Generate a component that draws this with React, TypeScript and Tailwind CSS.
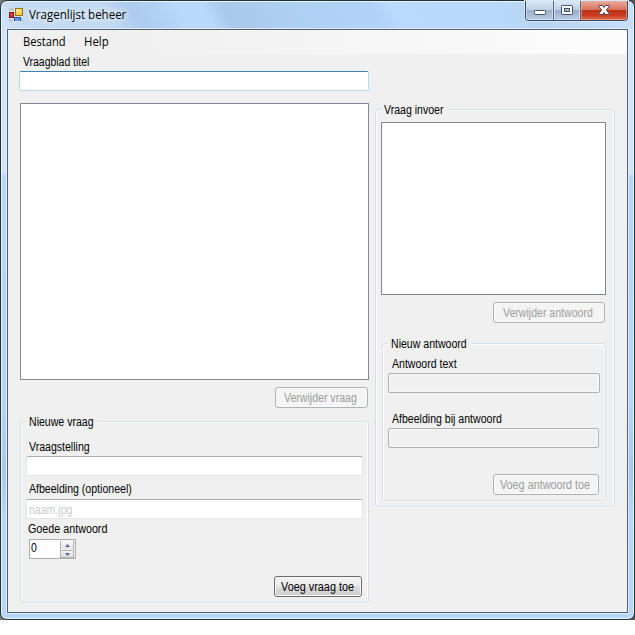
import React from "react";

function Txt({ children, className = "" }: { children: React.ReactNode; className?: string }) {
  return (
    <span
      className={`block w-max origin-left scale-x-[0.88] whitespace-nowrap font-['Liberation_Sans',Arial,sans-serif] text-[12px] leading-[14px] ${className}`}
    >
      {children}
    </span>
  );
}

function Group({
  title,
  legendClass,
  className,
  children,
}: {
  title: string;
  legendClass: string;
  className: string;
  children: React.ReactNode;
}) {
  return (
    <section
      className={`flex flex-col rounded-[3px] border border-[#d5dfe7] shadow-[inset_1px_1px_0_#fdfdfd,inset_-1px_0_0_#fdfdfd,0_1px_0_#fdfdfd] ${className}`}
    >
      <div className={`-mt-[7px] ml-[5px] h-[14px] bg-[#f0f0f0] pl-[3px] ${legendClass}`}>
        <Txt>{title}</Txt>
      </div>
      {children}
    </section>
  );
}

function PushButton({ label, className, disabled = false }: { label: string; className: string; disabled?: boolean }) {
  return (
    <button
      disabled={disabled}
      className={`flex h-[21px] justify-start rounded-[3px] border pt-[3px] ${
        disabled
          ? "border-[#adb2b5] bg-[#f4f4f4] text-[#9c9c9c] shadow-[inset_0_0_0_1px_#fafafa]"
          : "border-[#6c6c6c] bg-[linear-gradient(#f3f3f3,#ebebeb_49%,#dcdcdc_51%,#cecece)] text-black shadow-[inset_0_0_0_1px_#f8f8f8]"
      } ${className}`}
    >
      <Txt>{label}</Txt>
    </button>
  );
}

function TextBox({ className = "", children }: { className?: string; children?: React.ReactNode }) {
  return (
    <div className={`h-[20px] rounded-[2px] border border-[#e2e3ea] border-t-[#abadb3] bg-white pl-[2px] pt-[3px] ${className}`}>
      {children}
    </div>
  );
}

function DisabledBox({ className }: { className: string }) {
  return <div className={`h-[20px] rounded-[2px] border border-[#afb1b3] bg-[#f0f0f0] shadow-[inset_0_0_0_1px_#f7f7f7] ${className}`} />;
}

function AppIcon() {
  return (
    <svg width="14" height="14" viewBox="0 0 14 14" shapeRendering="crispEdges">
      <rect x="0" y="0" width="14" height="14" fill="#dfe4ea" />
      <rect x="0" y="0" width="5" height="3" fill="#c3c9d1" />
      <rect x="0" y="11" width="4" height="3" fill="#c3c9d1" />
      <rect x="12" y="10" width="2" height="4" fill="#c3c9d1" />
      <rect x="6" y="0" width="8" height="8" fill="#9b7313" />
      <rect x="7" y="1" width="6" height="6" fill="#f9cf43" />
      <rect x="7" y="1" width="5" height="3" fill="#fde481" />
      <rect x="0" y="4" width="5" height="6" fill="#841411" />
      <rect x="1" y="5" width="3" height="4" fill="#d9352b" />
      <rect x="2" y="6" width="1" height="1" fill="#f38b7c" />
      <rect x="5" y="9" width="7" height="4" fill="#2454a5" />
      <rect x="6" y="10" width="5" height="3" fill="#5d96ee" />
    </svg>
  );
}

function CaptionButtons() {
  return (
    <div className="flex h-[20px] w-[103px] overflow-hidden rounded-b-[4px] border border-t-0 border-[#3b4c62] shadow-[0_0_0_1px_#d3e7fb]">
      <div className="flex w-[28px] justify-center border-r border-[#52637a] bg-[linear-gradient(#dce8f5,#c1d0e2_45%,#9dafc8_50%,#b8cde6)] shadow-[inset_0_0_0_1px_#dce9f7aa]">
        <svg width="14" height="18" viewBox="0 0 14 18">
          <rect x="1.5" y="9.5" width="11" height="4" rx="0.7" fill="#fff" stroke="#47516a" />
        </svg>
      </div>
      <div className="flex w-[27px] justify-center border-r border-[#52637a] bg-[linear-gradient(#dce8f5,#c1d0e2_45%,#9dafc8_50%,#b8cde6)] shadow-[inset_0_0_0_1px_#dce9f7aa]">
        <svg width="14" height="18" viewBox="0 0 14 18">
          <rect x="1.5" y="4.5" width="11" height="9" rx="0.7" fill="#fff" stroke="#47516a" />
          <rect x="4.5" y="7.5" width="5" height="3" fill="#a5bad3" stroke="#47516a" />
        </svg>
      </div>
      <div className="flex flex-1 justify-center bg-[linear-gradient(#eaaa9d,#d8745f_45%,#bb3115_50%,#c93a1d_75%,#df7453)] shadow-[inset_0_0_0_1px_#f0aa9999]">
        <svg width="14" height="18" viewBox="0 0 14 18">
          <path
            d="M2 4.5h3.6L7 6.5l1.4-2H12v1.2L9.4 9l2.6 3.3v1.2H8.4L7 11.5l-1.4 2H2v-1.2L4.6 9 2 5.7z"
            fill="#fff"
            stroke="#553b50"
            strokeWidth="1"
          />
        </svg>
      </div>
    </div>
  );
}

function Spinner() {
  return (
    <div className="ml-[8px] mt-[3px] flex h-[20px] w-[47px] border border-[#abadb3] bg-white">
      <Txt className="ml-[1px] mt-[1px] w-[28px]!">0</Txt>
      <div className="ml-auto flex w-[15px] flex-col bg-[#f0f0f0] pr-[1px] pt-[1px]">
        <div className="flex h-[8px] items-center justify-center border-x border-[#b2b2b2] border-t-[#e4e4e4] bg-[linear-gradient(#f7f7f7,#e5e5e5)]">
          <svg width="5" height="3" viewBox="0 0 5 3">
            <path d="M0 3 2.5 0 5 3z" fill="#4968a5" />
          </svg>
        </div>
        <div className="mt-[1px] flex h-[8px] items-center justify-center border border-[#b2b2b2] bg-[linear-gradient(#f4f4f4,#dadada)]">
          <svg width="5" height="3" viewBox="0 0 5 3">
            <path d="M0 0h5L2.5 3z" fill="#4968a5" />
          </svg>
        </div>
      </div>
    </div>
  );
}

export default function App() {
  return (
    <div className="h-[635px] w-[635px] overflow-hidden bg-white text-black">
      <div className="h-[620px] w-[635px] bg-[linear-gradient(90deg,#777_50%,#555)]">
        <div className="flex h-[620px] w-[635px] flex-col rounded-[7px] border border-[#25303f] bg-[linear-gradient(#c3dcf800,#e9f1fa00_173px,#b7d6f8_174px,#b5d5f8_400px,#a9c8ec_470px,#b8d8fb_520px,#b5d6f9),linear-gradient(90deg,#cfe1f8,#e7f0fa_3%,#e7f0fa_97%,#cde3fb)] px-[6px] pb-[6px] shadow-[inset_0_0_0_1px_#e9f5ff]">
          {/* Title bar */}
          <header className="-mx-[5px] mt-px flex h-[27px] items-start rounded-t-[5px] bg-[linear-gradient(61deg,#cfe2f7_0%,#c3daf3_5%,#c3daf3_17%,#accbed_22%,#b0d0f3_25%,#b9d9fb_29%,#b9d9fb_33%,#a9c9ec_36%,#aed0f3_48%,#b0d3f7_59%,#b9d9fd_62%,#b9d9fb_78%,#b9d5f2_84%,#c8dff7_100%)]">
            <div className="ml-[7px] mt-[6px]">
              <AppIcon />
            </div>
            <span className="ml-[6px] mt-[5px] block origin-left scale-x-[0.96] whitespace-nowrap font-['Open_Sans','Noto_Sans',sans-serif] text-[12px] leading-[16px] [text-shadow:0_0_8px_#fff,0_0_8px_#e8f3ff]">
              Vragenlijst beheer
            </span>
            <div className="-mt-px ml-auto mr-[5px]">
              <CaptionButtons />
            </div>
          </header>

          {/* Client area */}
          <div className="flex h-[584px] w-[621px] flex-col border border-[#536070] bg-[#f0f0f0] shadow-[0_0_0_1px_#dceeff]">
            <nav className="flex h-[24px] shrink-0 bg-[linear-gradient(90deg,#f0f0f0_20%,#fcfcfc_95%)] pl-[15px] pt-[4px] font-['Open_Sans','Noto_Sans',sans-serif] text-[12px] leading-[16px]">
              <span className="block w-[61px] origin-left scale-x-[0.93]">Bestand</span>
              <span className="block origin-left scale-x-[0.95]">Help</span>
            </nav>

            <main className="flex">
              <div className="ml-[11px] flex w-[350px] flex-col">
                <Txt className="ml-[4px] mt-[1px] scale-x-[0.87]!">Vraagblad titel</Txt>
                <div className="mt-[2px] h-[20px] rounded-[2px] border border-[#b5d9ed] border-t-[#4081ad] bg-white" />
                <div className="ml-[1px] mt-[12px] h-[277px] border border-[#828790] bg-white" />
                <PushButton label="Verwijder vraag" disabled className="ml-[256px] mt-[7px] w-[93px] pl-[8px]" />

                <Group title="Nieuwe vraag" className="ml-[1px] mt-[13px] h-[182px] w-[349px]" legendClass="w-[71px]">
                  <Txt className="ml-[8px] mt-[11px]">Vraagstelling</Txt>
                  <TextBox className="ml-[5px] mt-[2px] w-[337px]" />
                  <Txt className="ml-[8px] mt-[6px]">Afbeelding (optioneel)</Txt>
                  <TextBox className="ml-[5px] mt-[3px] w-[337px]">
                    <Txt className="text-[#cbcbcb]">naam.jpg</Txt>
                  </TextBox>
                  <Txt className="ml-[7px] mt-[3px] scale-x-[0.895]!">Goede antwoord</Txt>
                  <Spinner />
                  <PushButton label="Voeg vraag toe" className="ml-[253px] mt-[17px] w-[88px] pl-[6px] [&>span]:scale-x-[0.905]" />
                </Group>
              </div>

              <Group title="Vraag invoer" className="ml-[6px] mt-[55px] h-[398px] w-[240px]" legendClass="w-[66px] ml-[6px]! pl-[2px]!">
                <div className="ml-[5px] mt-[5px] h-[173px] w-[225px] shrink-0 border border-[#828790] bg-white" />
                <PushButton label="Verwijder antwoord" disabled className="ml-[117px] mt-[7px] w-[112px] shrink-0 pl-[9px]" />
                <Group title="Nieuw antwoord" className="ml-[6px] mt-[20px] h-[158px] w-[224px] shrink-0" legendClass="w-[84px]">
                  <Txt className="ml-[9px] mt-[6px]">Antwoord text</Txt>
                  <DisabledBox className="ml-[5px] mt-[2px] w-[212px]" />
                  <Txt className="ml-[9px] mt-[19px]">Afbeelding bij antwoord</Txt>
                  <DisabledBox className="ml-[5px] mt-[2px] w-[211px]" />
                  <PushButton label="Voeg antwoord toe" disabled className="ml-[110px] mt-[26px] w-[106px] pl-[6px] [&>span]:scale-x-[0.9]" />
                </Group>
              </Group>
            </main>
          </div>
        </div>
      </div>
    </div>
  );
}
